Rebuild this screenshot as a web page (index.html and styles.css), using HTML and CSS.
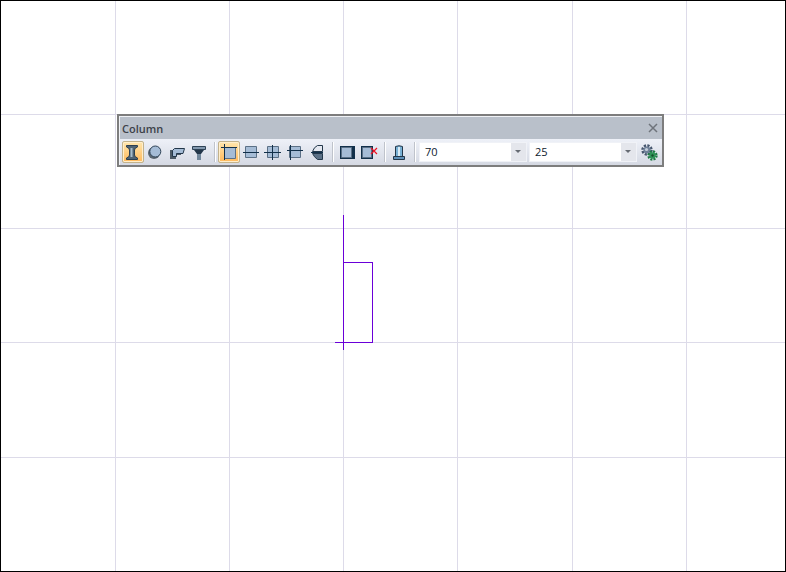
FILE: index.html
```html
<!DOCTYPE html>
<html lang="en">
<head>
<meta charset="utf-8">
<title>Column</title>
<link rel="stylesheet" href="styles.css">
</head>
<body>
<main class="canvas">
  <svg class="drawing" width="784" height="570" viewBox="0 0 784 570" shape-rendering="crispEdges">
    <g class="grid">
      <path d="M114.5 0V570M228.5 0V570M342.5 0V570M456.500 0V570M571.5 0V570M685.5 0V570"/>
      <path d="M0 113.5H784M0 227.5H784M0 341.5H784M0 456.5H784"/>
    </g>
    <g class="shape">
      <path d="M342.5 214V349"/>
      <path d="M334 341.5H371.5V261.5H342.5"/>
    </g>
  </svg>

  <section class="palette">
    <header class="title-bar">
      <span class="title">Column</span>
      <svg class="close" width="10" height="10" viewBox="0 0 10 10"><path d="M1 1L9 9M9 1L1 9"/></svg>
    </header>
    <div class="tools">
      <button class="tool active"><svg width="18" height="18" viewBox="0 0 18 18"><path fill="#4f6272" stroke="#2b3f50" d="M2.500 2.500H13.500V4Q10.500 5 10.500 7V12Q10.500 14 13.500 15V16.500H2.500V15Q5.500 14 5.500 12V7Q5.500 5 2.500 4Z"/><path fill="#a6bccb" d="M6.500 5H8.500V14H6.500Z"/></svg></button>
      <button class="tool"><svg width="18" height="18" viewBox="0 0 18 18"><circle cx="8" cy="10" r="6" fill="#5b6670"/><circle cx="9.300" cy="8.500" r="5.500" fill="#a5bcd6" stroke="#2f4356"/></svg></button>
      <button class="tool"><svg width="18" height="18" viewBox="0 0 18 18"><path fill="#4d5a66" d="M2 7H13V12H8V16H2Z"/><path fill="#a5bcd6" stroke="#23374a" d="M4.500 7.500L6.500 5.500H16.500L15 10.500H8.500V13.500H4.500Z"/></svg></button>
      <button class="tool"><svg width="18" height="18" viewBox="0 0 18 18"><path fill="#8298ae" stroke="#2f4356" d="M2.500 3.500H15.500V6.500H2.500Z"/><path fill="#23374a" d="M4 7H14L11 11H7Z"/><path fill="#71879b" d="M7 11H11V17H7Z"/></svg></button>
      <span class="sep"></span>
      <button class="tool active"><svg width="18" height="18" viewBox="0 0 18 18"><path fill="#a5bcd6" stroke="#5b7086" d="M4.500 4.500H15.500V15.500H4.500Z"/><path class="ink" d="M4.500 1V17M1 4.500H17"/></svg></button>
      <button class="tool"><svg width="18" height="18" viewBox="0 0 18 18"><path fill="#a5bcd6" stroke="#5b7086" d="M3.500 3.500H14.500V14.500H3.500Z"/><path class="ink" d="M1 9.500H17"/></svg></button>
      <button class="tool"><svg width="18" height="18" viewBox="0 0 18 18"><path fill="#a5bcd6" stroke="#5b7086" d="M3.500 3.500H14.500V14.500H3.500Z"/><path class="ink" d="M0 9.500H17M8.500 2V17"/></svg></button>
      <button class="tool"><svg width="18" height="18" viewBox="0 0 18 18"><path fill="#a5bcd6" stroke="#5b7086" d="M3.500 3.500H14.500V14.500H3.500Z"/><path class="ink" d="M1 7.500H17M4.500 2V17"/></svg></button>
      <button class="tool"><svg width="18" height="18" viewBox="0 0 18 18"><path fill="#e4e8f0" stroke="#23374a" d="M14.500 2.500H9.500Q6 4 4.500 8.500H14.500Z"/><path fill="#5b7086" stroke="#23374a" d="M14.500 10.500H4.500Q6 14 9.500 16.500H14.500Z"/><path class="ink" d="M3 9.500H15"/></svg></button>
      <span class="sep"></span>
      <button class="tool"><svg width="18" height="18" viewBox="0 0 18 18"><path fill="#12304a" d="M2 3H17V16H2Z"/><path fill="#a5bcd6" stroke="#5b7086" d="M3.500 4.500H13.500V14.500H3.500Z"/></svg></button>
      <button class="tool"><svg width="18" height="18" viewBox="0 0 18 18"><path fill="#12304a" d="M1 3H13V16H1Z"/><path fill="#a5bcd6" stroke="#5b7086" d="M2.500 4.500H11.500V14.500H2.500Z"/><path class="cross" d="M11 5L17 11M17 5L11 11"/></svg></button>
      <span class="sep"></span>
      <button class="tool"><svg width="18" height="18" viewBox="0 0 18 18"><path fill="#78b0d4" stroke="#23374a" d="M5.500 3.500Q9 2 12.500 3.500V13.500H5.500Z"/><path fill="#d8eaf4" d="M8 4H10V13H8Z"/><path fill="#5f90b8" stroke="#23374a" d="M3.500 13.500H14.500V16.500H3.500Z"/></svg></button>
      <span class="sep"></span>
      <div class="combo first"><span class="value">70</span><span class="drop"><i></i></span></div>
      <div class="combo"><span class="value">25</span><span class="drop"><i></i></span></div>
      <button class="tool gear"><svg width="20" height="20" viewBox="0 0 20 20"><circle cx="8" cy="8" r="4.500" fill="none" stroke="#46566e" stroke-width="2.500" stroke-dasharray="2.200 1.300"/><circle cx="8" cy="8" r="3.600" fill="#6f8098"/><circle cx="7.500" cy="7.500" r="1.600" fill="#c3cedb"/><circle cx="13.500" cy="13.500" r="4" fill="none" stroke="#1f7a45" stroke-width="2.400" stroke-dasharray="2 1.140"/><circle cx="13.500" cy="13.500" r="3.200" fill="#2f9458"/><circle cx="13.500" cy="13.500" r="1.200" fill="#174f2e"/></svg></button>
    </div>
  </section>
</main>
</body>
</html>
```
FILE: styles.css
```css
* { box-sizing: border-box; }

html, body {
  margin: 0;
  padding: 0;
  background: #fff;
}

.canvas {
  position: relative;
  width: 786px;
  height: 572px;
  border: 1px solid #000;
  background: #fff;
  overflow: hidden;
}

.drawing {
  display: block;
}

.grid path {
  fill: none;
  stroke: #dddbe9;
  stroke-width: 1;
}

.shape path {
  fill: none;
  stroke: #6a00d8;
  stroke-width: 1;
}

.palette {
  position: absolute;
  left: 116px;
  top: 113px;
  width: 547px;
  height: 53px;
  border: 2px solid #7d7d7d;
  background: #f0f2f6;
  padding: 1px 0 0 1px;
  display: flex;
  flex-direction: column;
}

.title-bar {
  height: 22px;
  background: #b9c0ca;
  display: flex;
  align-items: center;
  justify-content: space-between;
  padding: 0 4px 0 2px;
  flex: none;
}

.title {
  font: 600 11px "Open Sans", "Liberation Sans", sans-serif;
  color: #3c4149;
}

.close path {
  fill: none;
  stroke: #6f747b;
  stroke-width: 1.500;
}

.tools {
  flex: 1;
  display: flex;
  align-items: center;
  padding: 0 0 1px 2px;
  background: linear-gradient(#eef1f8, #d5d9e3);
}

.tool {
  width: 22px;
  height: 22px;
  padding: 0;
  border: 1px solid transparent;
  background: none;
  display: flex;
  align-items: center;
  justify-content: center;
  flex: none;
}

.tool.active {
  border-color: #c2b28c;
  border-radius: 2px;
  background: linear-gradient(#ffe6ad, #ffb95c);
  box-shadow: inset 0 0 0 1px #ffeecb;
}

.ink {
  fill: none;
  stroke: #12304a;
  stroke-width: 1;
}

.cross {
  fill: none;
  stroke: #ee1122;
  stroke-width: 1.200;
}

.sep {
  width: 8px;
  height: 20px;
  flex: none;
  display: flex;
  justify-content: center;
}

.sep::before {
  content: "";
  width: 1px;
  background: #bfc3cb;
  box-shadow: 1px 0 0 #fff;
}

.combo {
  width: 106px;
  height: 18px;
  flex: none;
  margin-left: 4px;
  background: #fff;
  box-shadow: 0 0 0 1px #f0f2f7;
  display: flex;
  align-items: center;
  justify-content: space-between;
}

.combo.first {
  margin-left: 2px;
}

.value {
  padding-left: 5px;
  font: 11px "Open Sans", "Liberation Sans", sans-serif;
  color: #0d1a2e;
}

.drop {
  width: 15px;
  height: 18px;
  padding-right: 1px;
  background: #e4e6ec;
  display: flex;
  align-items: center;
  justify-content: center;
}

.drop i {
  width: 0;
  height: 0;
  border-left: 3px solid transparent;
  border-right: 3px solid transparent;
  border-top: 3px solid #666b73;
}

.gear {
  margin-left: 2px;
}
```
